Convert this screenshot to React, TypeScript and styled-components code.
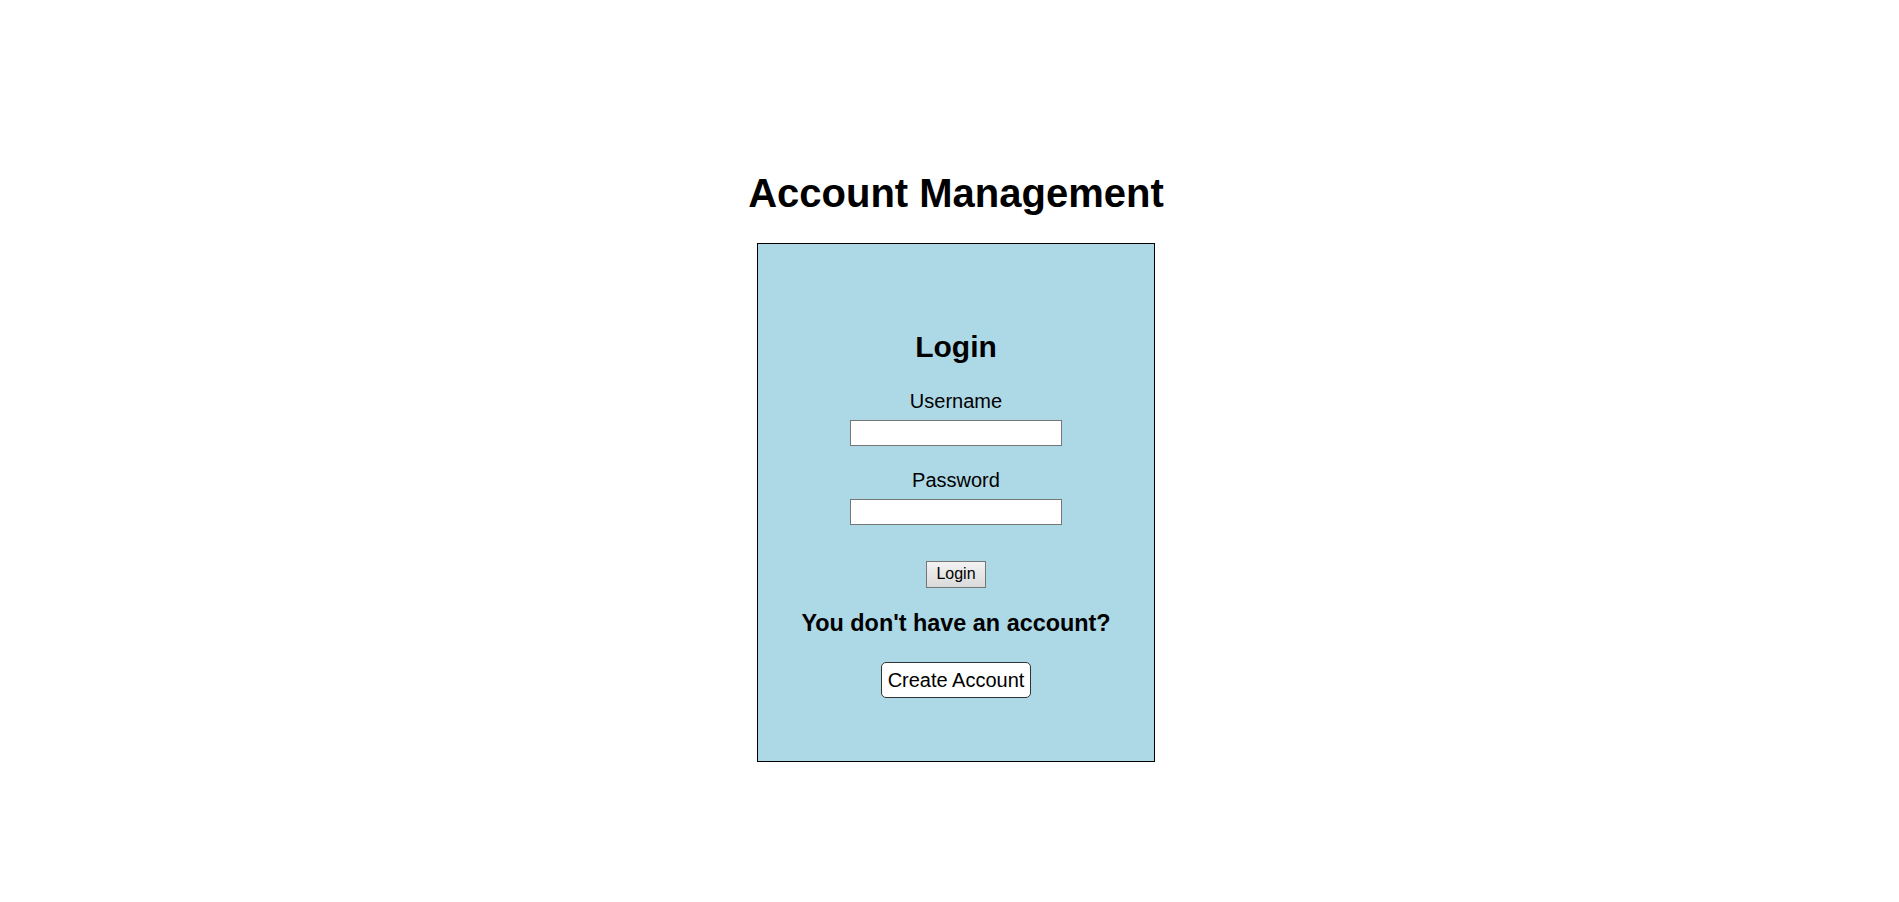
import React from "react";
import styled, { createGlobalStyle } from "styled-components";

const GlobalStyle = createGlobalStyle`
  html, body {
    margin: 0;
    padding: 0;
    background: #ffffff;
  }
  body {
    font-family: "Liberation Sans", Arial, sans-serif;
    color: #000000;
  }
`;

const Page = styled.div`
  display: flex;
  flex-direction: column;
  align-items: center;
  padding: 170px 0 0 13px;
`;

const Title = styled.h1`
  margin: 0 0 27px;
  font-size: 40px;
  line-height: 46px;
  font-weight: bold;
`;

const Card = styled.div`
  box-sizing: border-box;
  width: 398px;
  height: 519px;
  border: 1px solid #000000;
  background: #add8e6;
  display: flex;
  flex-direction: column;
  align-items: center;
  padding-top: 86px;
`;

const CardTitle = styled.h2`
  margin: 0;
  font-size: 30px;
  line-height: 34px;
  font-weight: bold;
`;

const Label = styled.label<{ $top: number }>`
  display: block;
  margin-top: ${(p) => p.$top}px;
  font-size: 20px;
  line-height: 23px;
`;

const Input = styled.input`
  box-sizing: border-box;
  margin-top: 7px;
  width: 212px;
  height: 26px;
  border: 1px solid #767676;
  background: #ffffff;
  padding: 1px 3px;
  font-family: "Liberation Sans", Arial, sans-serif;
  font-size: 16px;
  outline: none;
`;

const LoginButton = styled.button`
  box-sizing: border-box;
  margin-top: 35.5px;
  height: 27px;
  padding: 0 9.5px;
  border: 1px solid #767676;
  border-radius: 0;
  background: linear-gradient(#f2f2f2, #dadada);
  font-family: "Liberation Sans", Arial, sans-serif;
  font-size: 16px;
  line-height: 18px;
  color: #000000;
`;

const Prompt = styled.h3`
  margin: 22.5px 0 0;
  font-size: 23.4px;
  line-height: 27px;
  font-weight: bold;
`;

const CreateButton = styled.button`
  box-sizing: border-box;
  margin-top: 24.5px;
  height: 36px;
  padding: 0 6px;
  border: 1px solid #333333;
  border-radius: 5px;
  background: #ffffff;
  font-family: "Liberation Sans", Arial, sans-serif;
  font-size: 20px;
  line-height: 22px;
  color: #000000;
`;

export default function App() {
  return (
    <>
      <GlobalStyle />
      <Page>
        <Title>Account Management</Title>
        <Card>
          <CardTitle>Login</CardTitle>
          <Label $top={26} htmlFor="username">Username</Label>
          <Input id="username" type="text" />
          <Label $top={23} htmlFor="password">Password</Label>
          <Input id="password" type="password" />
          <LoginButton type="button">Login</LoginButton>
          <Prompt>You don't have an account?</Prompt>
          <CreateButton type="button">Create Account</CreateButton>
        </Card>
      </Page>
    </>
  );
}
